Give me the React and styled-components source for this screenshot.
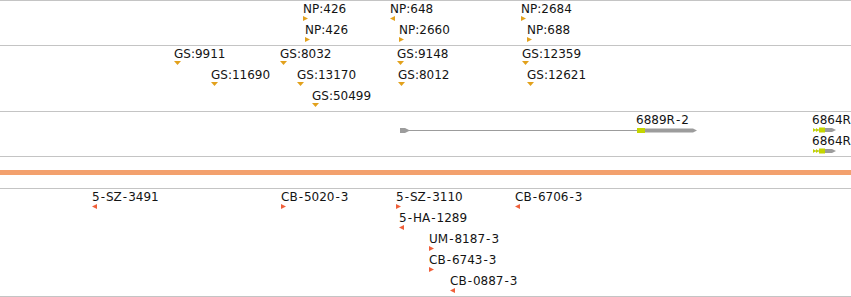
import React from "react";
import styled, { createGlobalStyle } from "styled-components";

const Global = createGlobalStyle`
  html, body { margin: 0; padding: 0; background: #fff; overflow: hidden; }
  body { font-family: "DejaVu Sans", "Liberation Sans", sans-serif; }
`;

const LINE = "#c4c4c4";
const GOLD = "#e2a11c";
const RED = "#f0603a";
const GRAY = "#9c9c9c";
const LIME = "#c4d500";

const Browser = styled.div`
  width: 851px;
  overflow: hidden;
  border-top: 1px solid ${LINE};
  background: #fff;
  display: flex;
  flex-direction: column;
`;

const Track = styled.div`
  position: relative;
  flex: none;
  height: ${(p) => p.$h}px;
  border-bottom: 1px solid ${LINE};
`;

const Divider = styled.div`
  flex: none;
  padding: 13px 0;
  border-bottom: 1px solid ${LINE};
`;

const OrangeBar = styled.div`
  height: 5px;
  background: #f3a16e;
`;

const Feature = styled.div`
  position: absolute;
  left: ${(p) => p.$x}px;
  top: ${(p) => 2 + 21 * p.$row}px;
  display: flex;
  flex-direction: column;
  align-items: flex-start;
  gap: 1px;
`;

const Label = styled.span`
  font-size: 12px;
  line-height: 12px;
  color: #141414;
  white-space: nowrap;
  margin-left: ${(p) => p.$offset || 0}px;
`;

const Hyphen = styled.span`
  padding: 0 1px;
`;

const shapes = {
  right: "polygon(0 0, 100% 50%, 0 100%)",
  left: "polygon(100% 0, 0 50%, 100% 100%)",
  down: "polygon(0 0, 100% 0, 50% 100%)",
};

const Marker = styled.span`
  display: block;
  width: ${(p) => (p.$shape === "down" ? 7 : 5)}px;
  height: ${(p) => (p.$shape === "down" ? 4 : 5)}px;
  background: ${(p) => p.$color};
  clip-path: ${(p) => shapes[p.$shape]};
`;

const Glyph = styled.svg`
  display: block;
  flex: none;
`;

function Text({ children, offset }) {
  const parts = children.split("-");
  return (
    <Label $offset={offset}>
      {parts.map((p, i) => (
        <React.Fragment key={i}>
          {i > 0 && <Hyphen>-</Hyphen>}
          {p}
        </React.Fragment>
      ))}
    </Label>
  );
}

const npFeatures = [
  { x: 303, row: 0, label: "NP:426", dir: "right" },
  { x: 305, row: 1, label: "NP:426", dir: "right" },
  { x: 390, row: 0, label: "NP:648", dir: "left" },
  { x: 399, row: 1, label: "NP:2660", dir: "right" },
  { x: 521, row: 0, label: "NP:2684", dir: "right" },
  { x: 527, row: 1, label: "NP:688", dir: "right" },
];

const gsFeatures = [
  { x: 174, row: 0, label: "GS:9911" },
  { x: 211, row: 1, label: "GS:11690" },
  { x: 280, row: 0, label: "GS:8032" },
  { x: 297, row: 1, label: "GS:13170" },
  { x: 312, row: 2, label: "GS:50499" },
  { x: 397, row: 0, label: "GS:9148" },
  { x: 398, row: 1, label: "GS:8012" },
  { x: 522, row: 0, label: "GS:12359" },
  { x: 527, row: 1, label: "GS:12621" },
];

const lineFeatures = [
  { x: 92, row: 0, label: "5-SZ-3491", dir: "left" },
  { x: 281, row: 0, label: "CB-5020-3", dir: "right" },
  { x: 396, row: 0, label: "5-SZ-3110", dir: "right" },
  { x: 515, row: 0, label: "CB-6706-3", dir: "left" },
  { x: 399, row: 1, label: "5-HA-1289", dir: "left" },
  { x: 429, row: 2, label: "UM-8187-3", dir: "right" },
  { x: 429, row: 3, label: "CB-6743-3", dir: "right" },
  { x: 450, row: 4, label: "CB-0887-3", dir: "left" },
];

function LongGene() {
  return (
    <Glyph width="298" height="7" viewBox="0 0 298 7">
      <polygon points="0,1 5,1 10,3.5 5,6 0,6" fill={GRAY} />
      <rect x="9" y="3" width="228" height="1" fill={GRAY} />
      <rect x="237" y="1" width="8" height="5" fill={LIME} />
      <rect x="245" y="1.5" width="48" height="4" fill={GRAY} />
      <polygon points="293,1.5 297,3.5 293,5.5" fill={GRAY} />
    </Glyph>
  );
}

function ShortGene() {
  return (
    <Glyph width="26" height="6" viewBox="0 0 26 6">
      <rect x="1" y="2.5" width="7" height="1" fill={GRAY} />
      <polygon points="1,1 4,3 1,5" fill={LIME} />
      <polygon points="4,1 7,3 4,5" fill={LIME} />
      <rect x="7" y="0.5" width="6" height="5" fill={LIME} />
      <rect x="13" y="1" width="7" height="4" fill={GRAY} />
      <polygon points="20,1 24,3 20,5" fill={GRAY} />
    </Glyph>
  );
}

export default function App() {
  return (
    <>
      <Global />
      <Browser>
        <Track $h={44}>
          {npFeatures.map((f, i) => (
            <Feature key={i} $x={f.x} $row={f.row}>
              <Text>{f.label}</Text>
              <Marker $shape={f.dir} $color={GOLD} />
            </Feature>
          ))}
        </Track>
        <Track $h={65}>
          {gsFeatures.map((f, i) => (
            <Feature key={i} $x={f.x} $row={f.row}>
              <Text>{f.label}</Text>
              <Marker $shape="down" $color={GOLD} />
            </Feature>
          ))}
        </Track>
        <Track $h={44}>
          <Feature $x={400} $row={0}>
            <Text offset={236}>6889R-2</Text>
            <LongGene />
          </Feature>
          <Feature $x={812} $row={0}>
            <Text>6864R</Text>
            <ShortGene />
          </Feature>
          <Feature $x={812} $row={1}>
            <Text>6864R</Text>
            <ShortGene />
          </Feature>
        </Track>
        <Divider>
          <OrangeBar />
        </Divider>
        <Track $h={107}>
          {lineFeatures.map((f, i) => (
            <Feature key={i} $x={f.x} $row={f.row}>
              <Text>{f.label}</Text>
              <Marker $shape={f.dir} $color={RED} />
            </Feature>
          ))}
        </Track>
      </Browser>
    </>
  );
}
